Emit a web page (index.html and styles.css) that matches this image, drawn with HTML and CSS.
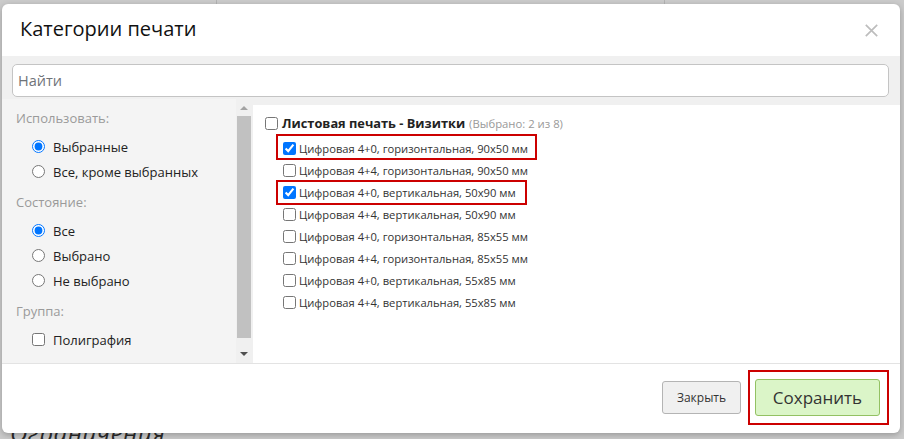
FILE: index.html
```html
<!DOCTYPE html>
<html lang="ru">
<head>
<meta charset="utf-8">
<title>Категории печати</title>
<link rel="stylesheet" href="styles.css">
</head>
<body>
<div class="backdrop">
  <div class="bg-line bg-line-a"></div>
  <div class="bg-line bg-line-b"></div>
  <div class="bg-text">Ограничения</div>
</div>
<div class="page">
  <div class="modal">
    <div class="modal-header">
      <h1 class="modal-title">Категории печати</h1>
      <button class="close-x" type="button" aria-label="Закрыть">
        <svg width="13" height="13" viewBox="0 0 13 13"><path d="M0.8 0.8 L12.2 12.2 M12.2 0.8 L0.8 12.2" stroke="#bdbdbd" stroke-width="1.7" fill="none"/></svg>
      </button>
    </div>
    <div class="modal-body">
      <div class="search-wrap">
        <input class="search" type="text" placeholder="Найти">
      </div>
      <div class="content">
        <div class="side">
          <div class="side-inner">
            <div class="group">
              <div class="group-label">Использовать:</div>
              <label class="opt"><input type="radio" name="use" checked><span>Выбранные</span></label>
              <label class="opt"><input type="radio" name="use"><span>Все, кроме выбранных</span></label>
            </div>
            <div class="group">
              <div class="group-label">Состояние:</div>
              <label class="opt"><input type="radio" name="state" checked><span>Все</span></label>
              <label class="opt"><input type="radio" name="state"><span>Выбрано</span></label>
              <label class="opt"><input type="radio" name="state"><span>Не выбрано</span></label>
            </div>
            <div class="group">
              <div class="group-label">Группа:</div>
              <label class="opt"><input type="checkbox"><span>Полиграфия</span></label>
            </div>
          </div>
          <div class="scrollbar">
            <div class="arrow arrow-up"></div>
            <div class="thumb"></div>
            <div class="track-fill"></div>
            <div class="arrow arrow-down"></div>
          </div>
        </div>
        <div class="main">
          <label class="cat"><input type="checkbox"><b>Листовая печать - Визитки</b><span class="count">(Выбрано: 2 из 8)</span></label>
          <div class="items">
            <label class="item marked m1"><input type="checkbox" checked><span>Цифровая 4+0, горизонтальная, 90x50 мм</span></label>
            <label class="item"><input type="checkbox"><span>Цифровая 4+4, горизонтальная, 90x50 мм</span></label>
            <label class="item marked m2"><input type="checkbox" checked><span>Цифровая 4+0, вертикальная, 50x90 мм</span></label>
            <label class="item"><input type="checkbox"><span>Цифровая 4+4, вертикальная, 50x90 мм</span></label>
            <label class="item"><input type="checkbox"><span>Цифровая 4+0, горизонтальная, 85x55 мм</span></label>
            <label class="item"><input type="checkbox"><span>Цифровая 4+4, горизонтальная, 85x55 мм</span></label>
            <label class="item"><input type="checkbox"><span>Цифровая 4+0, вертикальная, 55x85 мм</span></label>
            <label class="item"><input type="checkbox"><span>Цифровая 4+4, вертикальная, 55x85 мм</span></label>
          </div>
        </div>
      </div>
    </div>
    <div class="modal-footer">
      <button class="btn btn-close" type="button">Закрыть</button>
      <div class="mark-box">
        <button class="btn btn-save" type="button">Сохранить</button>
      </div>
    </div>
  </div>
</div>
</body>
</html>
```
FILE: styles.css
```css
* { box-sizing: border-box; }
html, body {
  margin: 0;
  padding: 0;
  width: 904px;
  height: 439px;
  overflow: hidden;
  background: #cbcbcb;
  font-family: "Open Sans", "Noto Sans", sans-serif;
}
.backdrop {
  position: absolute;
  left: 0; top: 0;
  width: 904px; height: 439px;
}
.bg-line {
  position: absolute;
  top: 0;
  width: 1px;
  height: 6px;
  background: #b3b3b3;
}
.bg-line-a { left: 216px; }
.bg-line-b { left: 664px; }
.bg-text {
  position: absolute;
  left: 10px;
  top: 418px;
  font-size: 24px;
  line-height: 30px;
  font-style: italic;
  color: #2a2a2a;
  letter-spacing: 0.5px;
}
.page {
  position: relative;
  padding: 4px 0 0 2px;
}
.modal {
  width: 898px;
  height: 429px;
  background: #fff;
  border-radius: 6px;
  box-shadow: 0 2px 6px rgba(0,0,0,0.25);
  display: flex;
  flex-direction: column;
  overflow: hidden;
}
.modal-header {
  height: 52px;
  display: flex;
  align-items: center;
  justify-content: space-between;
  padding: 0 22px 4px 18px;
}
.modal-title {
  margin: 0;
  font-size: 20px;
  font-weight: 400;
  color: #111;
}
.close-x {
  border: 0;
  background: none;
  padding: 0;
  width: 13px;
  height: 13px;
  display: flex;
  margin-top: 5px;
}
.modal-body {
  background: #f0f0f0;
  height: 307px;
  display: flex;
  flex-direction: column;
}
.search-wrap {
  padding: 8px 11px 2px 10px;
}
.search {
  display: block;
  width: 100%;
  height: 33px;
  border: 1px solid #c4c4c4;
  border-radius: 5px;
  background: #fff;
  padding: 0 5px;
  font-family: inherit;
  font-size: 14.5px;
  color: #333;
  outline: none;
}
.search::placeholder { color: #6f7378; }
.content {
  flex: 1;
  display: flex;
  min-height: 0;
}
.side {
  width: 249px;
  display: flex;
  background: #f4f4f4;
}
.side-inner {
  flex: 1;
  padding: 9px 0 0 14px;
}
.group { margin-bottom: 8px; }
.group-label {
  height: 20px;
  line-height: 20px;
  font-size: 13px;
  color: #9a9a9a;
  margin-bottom: 6px;
}
.opt {
  display: flex;
  align-items: center;
  height: 25px;
  padding-left: 16px;
  font-size: 13px;
  color: #222;
}
.opt input {
  width: 13px;
  height: 13px;
  margin: 0 8px 0 0;
}
.scrollbar {
  width: 15px;
  background: #f0f0f0;
  display: flex;
  flex-direction: column;
  align-items: center;
}
.arrow {
  height: 17px;
  width: 15px;
  display: flex;
  align-items: center;
  justify-content: center;
}
.arrow::before {
  content: "";
  width: 0; height: 0;
  border-left: 4px solid transparent;
  border-right: 4px solid transparent;
}
.arrow-up::before { border-bottom: 4px solid #a3a3a3; }
.arrow-down::before { border-top: 4px solid #505050; }
.arrow-down { height: 22px; padding-top: 4px; }
.thumb {
  width: 14px;
  height: 222px;
  background: #c1c1c1;
}
.track-fill { flex: 1; }
.main {
  flex: 1;
  background: #fff;
  margin: 6px 0 0 2px;
  padding: 7px 0 0 12px;
}
.cat {
  display: flex;
  align-items: center;
  height: 22px;
  font-size: 12.8px;
  color: #222;
}
.cat input {
  width: 13px; height: 13px;
  margin: 0 4px 0 0;
}
.cat b { font-weight: 700; }
.count {
  font-size: 11.3px;
  color: #999;
  margin-left: 4px;
}
.items {
  padding: 3px 0 0 18px;
}
.item {
  display: flex;
  width: fit-content;
  align-items: center;
  height: 22px;
  font-size: 11.2px;
  color: #333;
  position: relative;
}
.item input {
  width: 13px; height: 13px;
  margin: 0 3px 0 0;
}
.marked::after {
  content: "";
  position: absolute;
  left: -7px;
  right: -9px;
  top: -3px;
  bottom: -1px;
  border: 2px solid #cc0000;
}
.m2::after { top: -1px; bottom: -2px; right: -11px; }
.modal-footer {
  flex: 1;
  border-top: 1px solid #e3e3e3;
  display: flex;
  align-items: center;
  justify-content: flex-end;
  padding: 0 11px 2px 0;
}
.btn {
  font-family: inherit;
  color: #333;
  border-radius: 3px;
  cursor: pointer;
}
.btn-close {
  width: 79px;
  height: 33px;
  background: #f0f0f0;
  border: 1px solid #b4b4b4;
  font-size: 12px;
  margin-right: 7px;
}
.mark-box {
  border: 2px solid #cc0000;
  padding: 7px 7px 7px 5px;
}
.btn-save {
  display: block;
  width: 125px;
  height: 37px;
  background: #dbf5c8;
  border: 1px solid #93c163;
  font-size: 17px;
}
```
